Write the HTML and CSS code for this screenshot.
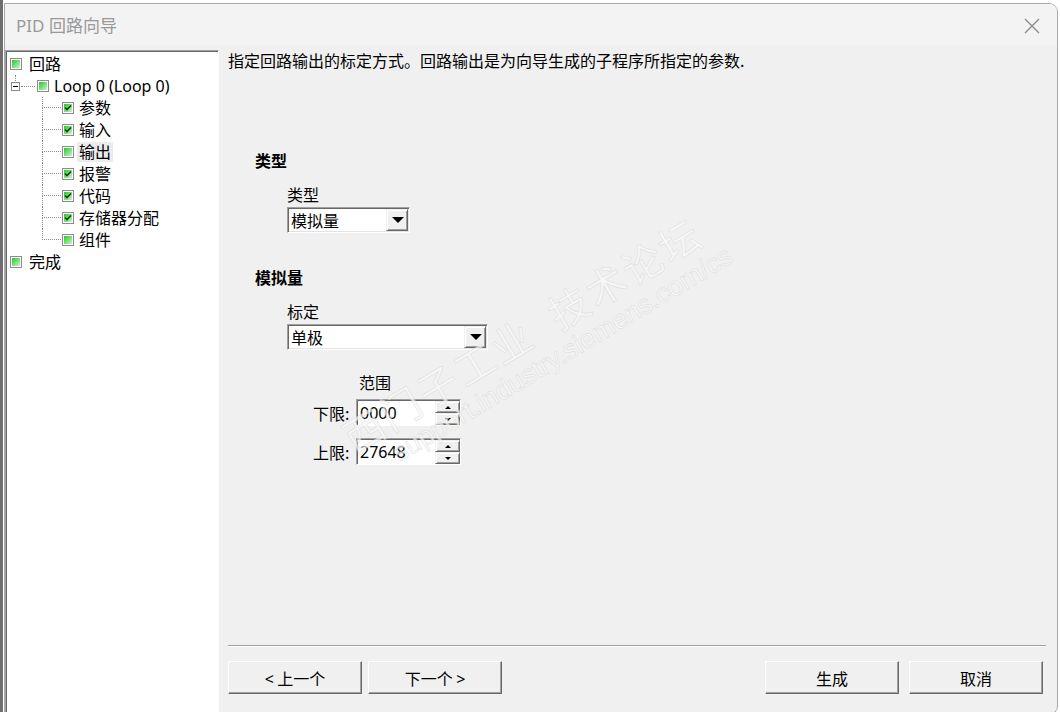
FILE: index.html
```html
<!DOCTYPE html>
<html lang="zh-CN">

<head>
    <meta charset="UTF-8">
    <title>PID 回路向导</title>
    <link rel="stylesheet" href="styles.css">
</head>

<body>
    <div class="window">
        <div class="titlebar">
            <span class="title">PID 回路向导</span>
            <span class="close">
                <svg width="18" height="18" viewBox="0 0 18 18"><path d="M2 2L16 16M16 2L2 16" stroke="#8a8a8a" stroke-width="1.3" fill="none"/></svg>
            </span>
        </div>
        <div class="dialog">
            <div class="tree">
                <div class="row">
                    <span class="node"><svg width="12" height="12" viewBox="0 0 12 12"><rect x="0.5" y="0.5" width="11" height="11" fill="#fff" stroke="#8c8c8c"/><rect x="2" y="2" width="8" height="8" fill="url(#g1)"/><defs><linearGradient id="g1" x1="0" y1="0" x2="1" y2="1"><stop offset="0" stop-color="#2cc42c"/><stop offset="1" stop-color="#c4f7c4"/></linearGradient></defs></svg></span>
                    <span class="label">回路</span>
                </div>
                <div class="row loop">
                    <span class="expander"><span class="minus"></span></span>
                    <span class="hline"></span>
                    <span class="node"><svg width="12" height="12" viewBox="0 0 12 12"><rect x="0.5" y="0.5" width="11" height="11" fill="#fff" stroke="#8c8c8c"/><rect x="2" y="2" width="8" height="8" fill="url(#g1)"/></svg></span>
                    <span class="label latin">Loop 0 (Loop 0)</span>
                </div>
                <ul class="children">
                    <li class="row child"><span class="branch"><span class="b-top"></span><span class="b-bot"></span></span><span class="node"><svg width="12" height="12" viewBox="0 0 12 12"><rect x="0.5" y="0.5" width="11" height="11" fill="#fff" stroke="#8c8c8c"/><rect x="2" y="2" width="8" height="8" fill="url(#g1)"/><path d="M3 5.5L5 7.5L9 3.5" stroke="#1d3d1d" stroke-width="1.6" fill="none"/></svg></span><span class="label">参数</span></li>
                    <li class="row child"><span class="branch"><span class="b-top"></span><span class="b-bot"></span></span><span class="node"><svg width="12" height="12" viewBox="0 0 12 12"><rect x="0.5" y="0.5" width="11" height="11" fill="#fff" stroke="#8c8c8c"/><rect x="2" y="2" width="8" height="8" fill="url(#g1)"/><path d="M3 5.5L5 7.5L9 3.5" stroke="#1d3d1d" stroke-width="1.6" fill="none"/></svg></span><span class="label">输入</span></li>
                    <li class="row child"><span class="branch"><span class="b-top"></span><span class="b-bot"></span></span><span class="node"><svg width="12" height="12" viewBox="0 0 12 12"><rect x="0.5" y="0.5" width="11" height="11" fill="#fff" stroke="#8c8c8c"/><rect x="2" y="2" width="8" height="8" fill="url(#g1)"/></svg></span><span class="label selected">输出</span></li>
                    <li class="row child"><span class="branch"><span class="b-top"></span><span class="b-bot"></span></span><span class="node"><svg width="12" height="12" viewBox="0 0 12 12"><rect x="0.5" y="0.5" width="11" height="11" fill="#fff" stroke="#8c8c8c"/><rect x="2" y="2" width="8" height="8" fill="url(#g1)"/><path d="M3 5.5L5 7.5L9 3.5" stroke="#1d3d1d" stroke-width="1.6" fill="none"/></svg></span><span class="label">报警</span></li>
                    <li class="row child"><span class="branch"><span class="b-top"></span><span class="b-bot"></span></span><span class="node"><svg width="12" height="12" viewBox="0 0 12 12"><rect x="0.5" y="0.5" width="11" height="11" fill="#fff" stroke="#8c8c8c"/><rect x="2" y="2" width="8" height="8" fill="url(#g1)"/><path d="M3 5.5L5 7.5L9 3.5" stroke="#1d3d1d" stroke-width="1.6" fill="none"/></svg></span><span class="label">代码</span></li>
                    <li class="row child"><span class="branch"><span class="b-top"></span><span class="b-bot"></span></span><span class="node"><svg width="12" height="12" viewBox="0 0 12 12"><rect x="0.5" y="0.5" width="11" height="11" fill="#fff" stroke="#8c8c8c"/><rect x="2" y="2" width="8" height="8" fill="url(#g1)"/><path d="M3 5.5L5 7.5L9 3.5" stroke="#1d3d1d" stroke-width="1.6" fill="none"/></svg></span><span class="label">存储器分配</span></li>
                    <li class="row child"><span class="branch"><span class="b-top"></span><span class="b-bot"></span></span><span class="node"><svg width="12" height="12" viewBox="0 0 12 12"><rect x="0.5" y="0.5" width="11" height="11" fill="#fff" stroke="#8c8c8c"/><rect x="2" y="2" width="8" height="8" fill="url(#g1)"/></svg></span><span class="label">组件</span></li>
                </ul>
                <div class="row">
                    <span class="node"><svg width="12" height="12" viewBox="0 0 12 12"><rect x="0.5" y="0.5" width="11" height="11" fill="#fff" stroke="#8c8c8c"/><rect x="2" y="2" width="8" height="8" fill="url(#g1)"/></svg></span>
                    <span class="label">完成</span>
                </div>
            </div>

            <div class="main">
                <p class="desc">指定回路输出的标定方式。回路输出是为向导生成的子程序所指定的参数.</p>

                <div class="content">
                    <h3 class="heading">类型</h3>
                    <div class="field">
                        <div class="caption">类型</div>
                        <div class="combo combo-short">
                            <span class="combo-text">模拟量</span>
                            <span class="combo-btn"><span class="tri-down"></span></span>
                        </div>
                    </div>

                    <h3 class="heading heading-2">模拟量</h3>
                    <div class="field">
                        <div class="caption">标定</div>
                        <div class="combo combo-long">
                            <span class="combo-text">单极</span>
                            <span class="combo-btn"><span class="tri-down"></span></span>
                        </div>
                    </div>

                    <div class="range">
                        <div class="range-title">范围</div>
                        <div class="spin-row">
                            <span class="spin-label">下限:</span>
                            <div class="spin">
                                <span class="spin-text">0000</span>
                                <span class="spin-btns">
                                    <span class="spin-btn"><span class="tri-up"></span></span>
                                    <span class="spin-btn"><span class="tri-small-down"></span></span>
                                </span>
                            </div>
                        </div>
                        <div class="spin-row">
                            <span class="spin-label">上限:</span>
                            <div class="spin">
                                <span class="spin-text">27648</span>
                                <span class="spin-btns">
                                    <span class="spin-btn"><span class="tri-up"></span></span>
                                    <span class="spin-btn"><span class="tri-small-down"></span></span>
                                </span>
                            </div>
                        </div>
                    </div>

                    <div class="watermark">
                        <span class="wm-cn">西门子工业&nbsp;&nbsp;技术论坛</span>
                        <span class="wm-en">support.industry.siemens.com/cs</span>
                    </div>
                </div>

                <div class="separator"></div>

                <div class="buttons">
                    <div class="nav">
                        <button class="btn"><span class="arrow">&lt;</span> 上一个</button>
                        <button class="btn">下一个 <span class="arrow">&gt;</span></button>
                    </div>
                    <div class="actions">
                        <button class="btn">生成</button>
                        <button class="btn">取消</button>
                    </div>
                </div>
            </div>
        </div>
    </div>
</body>

</html>
```

FILE: styles.css
```css
html,
body {
    margin: 0;
    height: 100%;
    overflow: hidden;
}

body {
    background: #ffffff;
    border-left: 3px solid #6e6e6e;
    padding: 3px 2px 0 1px;
    box-sizing: border-box;
    font-family: "Noto Sans", "Noto Sans CJK SC", sans-serif;
    color: #000;
}

.window {
    height: 712px;
    box-sizing: border-box;
    border: 1px solid #a8a8a8;
    border-radius: 0 9px 9px 0;
    background: #f0f0f0;
    display: flex;
    flex-direction: column;
    overflow: hidden;
}

.titlebar {
    height: 42px;
    flex: none;
    background: #f3f3f3;
    display: flex;
    align-items: center;
    justify-content: space-between;
    padding: 0 16px 0 11px;
}

.title {
    font-size: 17px;
    color: #999999;
    font-family: "Noto Sans", "Noto Sans CJK SC", sans-serif;
    margin-top: -1px;
}

.close {
    display: flex;
    margin-top: 1px;
}

.dialog {
    flex: 1;
    display: flex;
    padding-top: 4px;
}

/* tree */
.tree {
    width: 214px;
    flex: none;
    background: #fff;
    border-top: 1px solid #a0a0a0;
    border-left: 1px solid #a0a0a0;
    box-shadow: inset 1px 1px 0 #696969;
    border-right: 1px solid #fff;
    padding: 2px 0 0 4px;
    box-sizing: border-box;
    font-size: 16px;
}

.row {
    height: 22px;
    display: flex;
    align-items: center;
}

.node {
    width: 12px;
    height: 12px;
    display: flex;
    margin-right: 7px;
}

.label {
    line-height: 20px;
    padding: 0 2px;
    margin-left: -2px;
}

.label.latin {
    font-family: "Noto Sans", sans-serif;
}

.selected {
    background: #ececec;
}

.loop {
    padding-left: 1px;
}

.loop .node,
.child .node {
    margin-right: 5px;
}

.expander {
    width: 9px;
    height: 22px;
    display: flex;
    align-items: center;
    justify-content: center;
    position: relative;
}

.expander::before {
    content: "";
    position: absolute;
    left: 4px;
    top: 0;
    height: 6px;
    border-left: 1px dotted #8a8a8a;
}

.minus {
    width: 7px;
    height: 7px;
    border: 1px solid #8a8a8a;
    background: linear-gradient(#000, #000) center / 5px 1px no-repeat, #fff;
}

.hline {
    width: 14px;
    border-top: 1px dotted #8a8a8a;
    margin: 0 2px 0 1px;
}

.children {
    list-style: none;
    margin: 0;
    padding: 0 0 0 32px;
}

.branch {
    width: 19px;
    height: 22px;
    display: flex;
    flex-direction: column;
    margin-right: 1px;
}

.b-top {
    height: 10px;
    border-left: 1px dotted #8a8a8a;
    border-bottom: 1px dotted #8a8a8a;
}

.b-bot {
    flex: 1;
    border-left: 1px dotted #8a8a8a;
}

.child:last-child .b-bot {
    border-left: 0;
}

/* main */
.main {
    flex: 1;
    display: flex;
    flex-direction: column;
    padding: 0 11px 0 9px;
    font-size: 16px;
    font-family: "Noto Sans CJK SC", "Noto Sans", sans-serif;
}

.desc {
    margin: 0;
    line-height: 20px;
}

.content {
    flex: 1;
    position: relative;
    padding-left: 27px;
}

.heading {
    margin: 80px 0 0;
    font-size: 16px;
    line-height: 20px;
    font-weight: bold;
}

.heading-2 {
    margin-top: 34px;
}

.field {
    padding-left: 32px;
    margin-top: 14px;
}

.caption {
    line-height: 20px;
}

.combo {
    margin-top: 3px;
    height: 26px;
    box-sizing: border-box;
    display: flex;
    background: #fff;
    border: 1px solid;
    border-color: #a0a0a0 #fff #fff #a0a0a0;
    box-shadow: inset 1px 1px 0 #696969, inset -1px -1px 0 #e3e3e3;
    padding: 1px;
}

.combo-short {
    width: 123px;
}

.combo-long {
    width: 201px;
}

.combo-text {
    flex: 1;
    line-height: 22px;
    padding-left: 2px;
}

.combo-btn {
    width: 22px;
    height: 22px;
    box-sizing: border-box;
    background: #f0f0f0;
    border: 1px solid;
    border-color: #f0f0f0 #696969 #696969 #f0f0f0;
    box-shadow: inset 1px 1px 0 #fff, inset -1px -1px 0 #a0a0a0;
    display: flex;
    align-items: center;
    justify-content: center;
}

.tri-down {
    width: 0;
    height: 0;
    border-left: 6px solid transparent;
    border-right: 6px solid transparent;
    border-top: 6px solid #000;
    margin-left: 1px;
}

.range {
    margin-top: 22px;
    padding-left: 58px;
}

.range-title {
    line-height: 20px;
    padding-left: 46px;
}

.spin-row {
    display: flex;
    align-items: center;
    margin-top: 7px;
}

.spin-row + .spin-row {
    margin-top: 12px;
}

.spin-label {
    width: 43px;
    line-height: 20px;
}

.spin {
    width: 105px;
    height: 27px;
    box-sizing: border-box;
    display: flex;
    background: #fff;
    border: 1px solid;
    border-color: #a0a0a0 #fff #fff #a0a0a0;
    box-shadow: inset 1px 1px 0 #696969;
    padding: 1px 0 0 1px;
}

.spin-text {
    flex: 1;
    font-family: "Noto Sans", sans-serif;
    line-height: 24px;
    padding-left: 2px;
}

.spin-btns {
    width: 25px;
    display: flex;
    flex-direction: column;
}

.spin-btn {
    flex: 1;
    box-sizing: border-box;
    background: #f0f0f0;
    border: 1px solid;
    border-color: #f0f0f0 #696969 #696969 #f0f0f0;
    box-shadow: inset 1px 1px 0 #fff, inset -1px -1px 0 #a0a0a0;
    display: flex;
    align-items: center;
    justify-content: center;
}

.tri-up {
    width: 0;
    height: 0;
    border-left: 3px solid transparent;
    border-right: 3px solid transparent;
    border-bottom: 3px solid #000;
}

.tri-small-down {
    width: 0;
    height: 0;
    border-left: 3px solid transparent;
    border-right: 3px solid transparent;
    border-top: 3px solid #000;
}

.watermark {
    position: absolute;
    left: 70px;
    top: 290px;
    width: 460px;
    transform: rotate(-31deg);
    transform-origin: left top;
    color: #f9f9f9;
    pointer-events: none;
    display: flex;
    flex-direction: column;
    -webkit-text-stroke: 0.6px #d9d9d9;
    opacity: 0.7;
}

.wm-cn {
    font-size: 40px;
    line-height: 46px;
    letter-spacing: 3px;
    white-space: nowrap;
    margin-top: 70px;
}

.wm-en {
    font-family: "Liberation Sans", sans-serif;
    font-size: 27px;
    white-space: nowrap;
    margin-left: 34px;
}

.separator {
    height: 0;
    border-top: 1px solid #a0a0a0;
    border-bottom: 1px solid #fff;
    margin-bottom: 14px;
}

.buttons {
    display: flex;
    justify-content: space-between;
    margin-bottom: 20px;
}

.nav,
.actions {
    display: flex;
    gap: 6px;
}

.actions {
    gap: 10px;
    margin-right: 3px;
}

.btn {
    width: 134px;
    height: 33px;
    box-sizing: border-box;
    background: #f0f0f0;
    font-family: "Noto Sans CJK SC", "Noto Sans", sans-serif;
    font-size: 16px;
    color: #000;
    border: 1px solid;
    border-color: #fff #696969 #696969 #fff;
    box-shadow: inset -1px -1px 0 #a0a0a0;
    padding: 0;
}

.arrow {
    font-family: "Noto Sans", sans-serif;
}
```
